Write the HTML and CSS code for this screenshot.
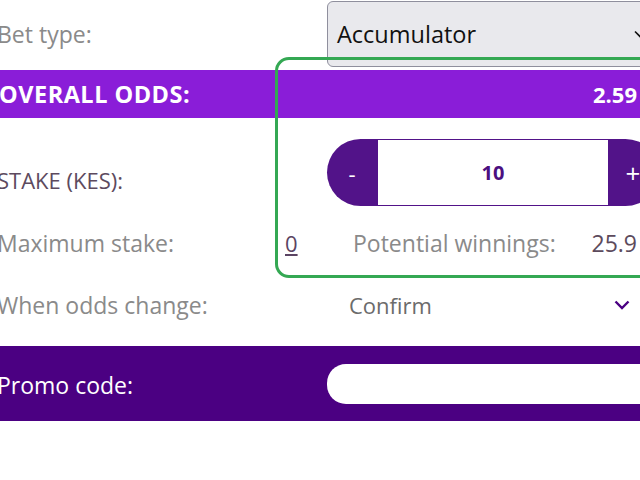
FILE: index.html
```html
<!DOCTYPE html>
<html lang="en">
<head>
    <meta charset="UTF-8">
    <meta name="viewport" content="width=device-width, initial-scale=1.0">
    <title>Betslip</title>
    <link rel="stylesheet" href="styles.css">
</head>
<body>
<div id="betslip">
    <div class="row bet-row">
        <span class="label">Bet type:</span>
        <div class="select">
            <span>Accumulator</span>
            <svg class="caret" width="12" height="8" viewBox="0 0 12 8"><path d="M1 1.5 L6 6.5 L11 1.5" fill="none" stroke="#111" stroke-width="1.6"/></svg>
        </div>
    </div>

    <div class="odds-bar">
        <span class="odds-label">OVERALL ODDS:</span>
        <span class="odds-value">2.59</span>
    </div>

    <div class="row stake-row">
        <span class="label stake-label">STAKE (KES):</span>
        <div class="stepper">
            <button class="step-btn minus">-</button>
            <input type="text" class="stake-input" value="10">
            <button class="step-btn plus">+</button>
        </div>
    </div>

    <div class="info-row">
        <span class="label">Maximum stake:</span>
        <a class="max-stake">0</a>
        <span class="label">Potential winnings:</span>
        <span class="winnings">25.9</span>
    </div>

    <div class="row change-row">
        <span class="label">When odds change:</span>
        <div class="dropdown">
            <span>Confirm</span>
            <svg width="16" height="10" viewBox="0 0 16 10"><path d="M1.5 1.5 L8 8 L14.5 1.5" fill="none" stroke="#4b0082" stroke-width="2.4"/></svg>
        </div>
    </div>

    <div class="promo-bar">
        <span>Promo code:</span>
        <input type="text" class="promo-input">
    </div>

    <div class="highlight"></div>
</div>
</body>
</html>
```

FILE: styles.css
```css
body {
    font-family: "Open Sans", "DejaVu Sans", sans-serif;
    margin: 0;
    padding: 0;
    background-color: #ffffff;
    overflow: hidden;
}

#betslip {
    position: relative;
    width: 662px;
    margin-left: -3px;
    font-size: 23px;
    line-height: 30px;
}

.row {
    display: grid;
    grid-template-columns: 330px 332px;
    align-items: center;
}

.label {
    color: #8a8a8a;
}

.bet-row {
    padding-top: 1px;
}

.select {
    height: 66px;
    box-sizing: border-box;
    display: flex;
    align-items: center;
    justify-content: space-between;
    padding: 0 12px 0 9px;
    background-color: #e9e9ed;
    border: 1px solid #8f8f9d;
    border-radius: 6px;
    font-size: 23.5px;
    color: #111;
}

.odds-bar {
    margin-top: 3px;
    height: 48px;
    display: flex;
    align-items: center;
    justify-content: space-between;
    padding: 0 22px 0 2px;
    background-color: #8a1dd8;
    color: #fff;
    font-size: 22px;
    font-weight: bold;
}

.odds-label {
    font-size: 23.5px;
    letter-spacing: 0.5px;
}

.stake-row {
    padding-top: 21px;
}

.stake-label {
    color: #5d4a5e;
    font-size: 22px;
    padding-top: 14px;
}

.stepper {
    display: flex;
    height: 67px;
}

.step-btn {
    width: 50px;
    border: none;
    background-color: #521389;
    color: #fff;
    font-family: inherit;
    font-size: 22px;
    padding: 0;
}

.minus {
    border-radius: 34px 0 0 34px;
    padding-left: 0;
}

.plus {
    border-radius: 0 34px 34px 0;
    padding-right: 2px;
    font-size: 26px;
}

.stake-input {
    width: 232px;
    box-sizing: border-box;
    border: 1px solid #521389;
    text-align: center;
    font-family: inherit;
    font-size: 20px;
    font-weight: bold;
    color: #4b0f80;
    outline: none;
}

.info-row {
    display: grid;
    grid-template-columns: 288px 68px 1fr auto;
    padding: 22px 22px 0 0;
}

.max-stake {
    color: #5b4463;
    text-decoration: underline;
    font-size: 22px;
}

.winnings {
    color: #5c4a5c;
}

.change-row {
    padding: 32px 0 26px;
}

.dropdown {
    display: flex;
    align-items: center;
    justify-content: space-between;
    padding: 0 29px 0 22px;
    color: #6b6b6b;
    font-size: 22px;
}

.promo-bar {
    display: grid;
    grid-template-columns: 330px 332px;
    align-items: center;
    height: 75px;
    background-color: #4b0082;
    color: #fff;
}

.promo-bar span {
    padding-top: 2px;
}

.promo-input {
    height: 38px;
    border: none;
    border-radius: 19px;
    background-color: #fff;
    outline: none;
}

.highlight {
    position: absolute;
    left: 278px;
    top: 57px;
    width: 420px;
    height: 221px;
    box-sizing: border-box;
    border: 3px solid #34a853;
    border-radius: 14px;
    pointer-events: none;
}
```
